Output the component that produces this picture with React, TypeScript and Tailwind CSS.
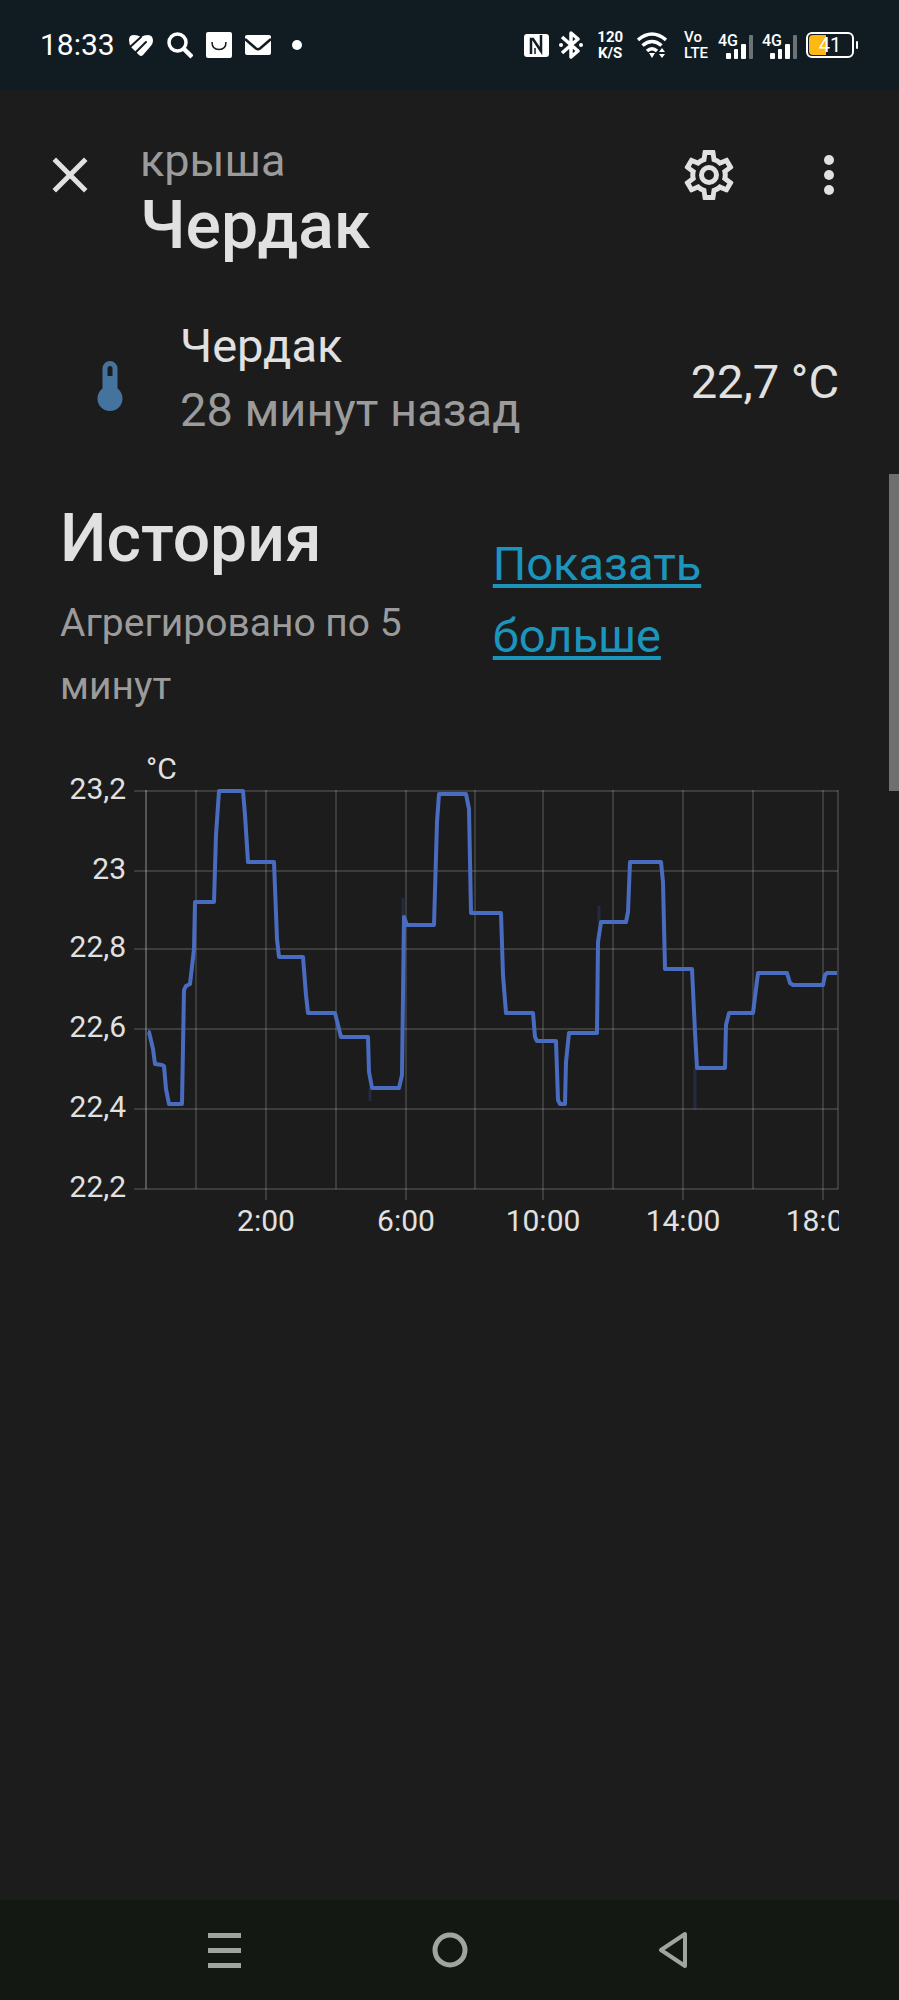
import React from 'react';

const cogPath =
  "M12,8A4,4 0 0,1 16,12A4,4 0 0,1 12,16A4,4 0 0,1 8,12A4,4 0 0,1 12,8M12,10A2,2 0 0,0 10,12A2,2 0 0,0 12,14A2,2 0 0,0 14,12A2,2 0 0,0 12,10M10,22C9.75,22 9.54,21.82 9.5,21.58L9.13,18.93C8.5,18.68 7.96,18.34 7.44,17.94L4.95,18.95C4.73,19.03 4.46,18.95 4.34,18.73L2.34,15.27C2.21,15.05 2.27,14.78 2.46,14.63L4.57,12.97L4.5,12L4.57,11L2.46,9.37C2.27,9.22 2.21,8.95 2.34,8.73L4.34,5.27C4.46,5.05 4.73,4.96 4.95,5.05L7.44,6.05C7.96,5.66 8.5,5.32 9.13,5.07L9.5,2.42C9.54,2.18 9.75,2 10,2H14C14.25,2 14.46,2.18 14.5,2.42L14.87,5.07C15.5,5.32 16.04,5.66 16.56,6.05L19.05,5.05C19.27,4.96 19.54,5.05 19.66,5.27L21.66,8.73C21.79,8.95 21.73,9.22 21.54,9.37L19.43,11L19.5,12L19.43,13L21.54,14.63C21.73,14.78 21.79,15.05 21.66,15.27L19.66,18.73C19.54,18.95 19.27,19.04 19.05,18.95L16.56,17.95C16.04,18.34 15.5,18.68 14.87,18.93L14.5,21.58C14.46,21.82 14.25,22 14,22H10M11.25,4L10.88,6.61C9.68,6.86 8.62,7.5 7.85,8.39L5.44,7.35L4.69,8.65L6.8,10.2C6.4,11.37 6.4,12.64 6.8,13.8L4.68,15.36L5.43,16.66L7.86,15.62C8.63,16.5 9.68,17.14 10.87,17.38L11.24,20H12.76L13.13,17.39C14.32,17.14 15.37,16.5 16.14,15.62L18.57,16.66L19.32,15.36L17.2,13.81C17.6,12.64 17.6,11.37 17.2,10.2L19.31,8.65L18.56,7.35L16.15,8.39C15.38,7.5 14.32,6.86 13.12,6.62L12.75,4H11.25Z";

const yTicks = [
  { label: "23,2", y: 49 },
  { label: "23", y: 129 },
  { label: "22,8", y: 207 },
  { label: "22,6", y: 287 },
  { label: "22,4", y: 367 },
  { label: "22,2", y: 447 },
];

const xTicks = [
  { label: "", x: 136 },
  { label: "2:00", x: 206 },
  { label: "", x: 276 },
  { label: "6:00", x: 346 },
  { label: "", x: 415 },
  { label: "10:00", x: 483 },
  { label: "", x: 553 },
  { label: "14:00", x: 623 },
  { label: "", x: 693 },
  { label: "18:00", x: 763 },
  { label: "", x: 778 },
];

const temperature = [
  [88, 290], [89, 290], [93, 307], [95, 322], [102, 323], [104, 324], [106, 347], [109, 362],
  [122, 362], [124, 248], [126, 244], [130, 242], [134, 207], [135, 160],
  [154, 160], [156, 93], [159, 49], [183, 49], [185, 73], [188, 120],
  [214, 120], [217, 197], [219, 215], [243, 215], [246, 253], [248, 271],
  [275, 271], [281, 295], [308, 295], [309, 330], [312, 346], [339, 346],
  [342, 333], [344, 175], [347, 183], [374, 183], [377, 80], [379, 52],
  [406, 52], [409, 67], [411, 171], [441, 171], [443, 233], [446, 271],
  [473, 271], [475, 295], [477, 299], [496, 299], [498, 358], [500, 362],
  [505, 362], [506, 320], [509, 291], [537, 291], [538, 200], [541, 180],
  [566, 180], [568, 170], [570, 120], [601, 120], [603, 140], [605, 227],
  [632, 227], [635, 290], [637, 326], [665, 326], [666, 283], [669, 271],
  [693, 271], [698, 231], [727, 231], [730, 241], [733, 243], [763, 243],
  [765, 233], [767, 231], [777, 231],
];

function Signal() {
  return (
    <svg className="h-7 w-9" viewBox="0 0 36 28" fill="#fff">
      <text x="0" y="15" fontSize="16" fontWeight="500">4G</text>
      <rect x="8" y="22" width="5" height="6" rx="1" />
      <rect x="16" y="18" width="4" height="10" rx="1" />
      <rect x="23" y="13" width="5" height="15" rx="1" />
      <rect x="31" y="4" width="4" height="24" rx="1" fill="#6c7377" />
    </svg>
  );
}

function StatusBar() {
  return (
    <div className="flex h-[90px] items-center justify-between bg-[#111c22] px-10 text-white">
      <div className="flex items-center gap-[13px]">
        <span className="text-[30px] leading-9">18:33</span>
        <svg className="h-7 w-[26px]" viewBox="0 0 26 28">
          <path
            d="M1 9Q1 4 6 4Q10 4 13 6Q16 4 20 4Q25 4 25 10Q25 13 22 16L15 24Q13 26 11 24L3 16Q1 13 1 9Z"
            fill="#fff"
          />
          <path d="M1 17L13 6M8 21L18 11" stroke="#111c22" strokeWidth="2" strokeLinecap="round" />
        </svg>
        <svg className="h-7 w-[26px]" viewBox="0 0 26 28" fill="none" stroke="#fff">
          <circle cx="10.500" cy="11.500" r="8.500" strokeWidth="3.500" />
          <path d="M16.500 17.500L25 26" strokeWidth="4.500" />
        </svg>
        <svg className="h-7 w-[26px]" viewBox="0 0 26 28">
          <rect y="1" width="26" height="26" rx="2" fill="#fff" />
          <path d="M6 11Q6 18.500 13 18.500T20 11" fill="none" stroke="#111c22" strokeWidth="1.500" />
        </svg>
        <svg className="h-7 w-[26px]" viewBox="0 0 26 28">
          <rect y="4" width="26" height="20" rx="2" fill="#fff" />
          <path d="M0 8L11 17.500Q13 19 15 17.500L26 8" fill="none" stroke="#111c22" strokeWidth="2.500" />
        </svg>
        <span className="ml-2 size-[10px] rounded-full bg-white" />
      </div>

      <div className="flex items-center">
        <svg className="h-7 w-[25px]" viewBox="0 0 25 28">
          <rect y="3" width="25" height="23" rx="3" fill="#fff" />
          <path d="M7 23V8H9L17 20V4" fill="none" stroke="#111c22" strokeWidth="2.500" />
          <path d="M11 23V17" stroke="#111c22" strokeWidth="1.500" />
        </svg>
        <svg className="ml-[10px] h-7 w-6" viewBox="0 0 24 28" fill="none" stroke="#fff" strokeWidth="3.500">
          <path d="M3 6L19 20L12 26V2L19 8L3 22" strokeLinejoin="round" />
          <circle cx="2" cy="14" r="2" fill="#fff" stroke="none" />
          <circle cx="22" cy="14" r="2" fill="#fff" stroke="none" />
        </svg>
        <div className="ml-[14px] flex flex-col text-center text-[15px] font-bold leading-4">
          <span>120</span>
          <span>K/S</span>
        </div>
        <svg className="ml-[14px] h-7 w-[30px]" viewBox="0 0 30 28" fill="none" stroke="#fff" strokeWidth="3.500">
          <path d="M1 9Q15 -3 29 9" />
          <path d="M5.500 14.500Q15 6.500 24.500 14.500" />
          <path d="M10 20Q15 15.500 20 20" />
          <path d="M12 22H18L15 27Z" fill="#fff" stroke="none" />
          <path d="M22 21L25 17L28 21ZM22 23H28L25 27Z" fill="#fff" stroke="none" />
        </svg>
        <div className="ml-[17px] flex flex-col text-[15px] font-medium leading-4">
          <span>Vo</span>
          <span>LTE</span>
        </div>
        <div className="ml-[10px] flex gap-2">
          <Signal />
          <Signal />
        </div>
        <svg className="ml-2 h-7 w-[53px]" viewBox="0 0 53 28">
          <rect x="1" y="2" width="46" height="24" rx="5" fill="none" stroke="#fff" strokeWidth="2" />
          <path d="M7 4H20V24H7Q3 24 3 20V8Q3 4 7 4Z" fill="#fdb813" />
          <rect x="50" y="10" width="2" height="8" rx="1" fill="#fff" />
          <text x="24" y="21" fontSize="20" fill="#fff" textAnchor="middle">41</text>
        </svg>
      </div>
    </div>
  );
}

function DialogHeader() {
  return (
    <header className="flex items-start px-[10px] pt-[25px]">
      <button aria-label="Закрыть" className="flex size-[120px] shrink-0 items-center justify-center">
        <svg className="size-[60px]" viewBox="0 0 24 24" fill="#e1e1e1">
          <path d="M19,6.410L17.590,5L12,10.590L6.410,5L5,6.410L10.590,12L5,17.590L6.410,19L12,13.410L17.590,19L19,17.590L13.410,12L19,6.410Z" />
        </svg>
      </button>
      <div className="flex-1 pl-[10px] pt-4">
        <p className="text-[45px] leading-[60px] text-[#9b9b9b]">крыша</p>
        <h1 className="text-[66px] font-medium leading-[70px]">Чердак</h1>
      </div>
      <button aria-label="Настройки" className="flex size-[120px] shrink-0 items-center justify-center">
        <svg className="size-[60px]" viewBox="0 0 24 24" fill="#e1e1e1">
          <path d={cogPath} />
        </svg>
      </button>
      <button aria-label="Меню" className="flex size-[120px] shrink-0 items-center justify-center">
        <svg className="size-[60px]" viewBox="0 0 24 24" fill="#e1e1e1">
          <circle cx="12" cy="6" r="2" />
          <circle cx="12" cy="12" r="2" />
          <circle cx="12" cy="18" r="2" />
        </svg>
      </button>
    </header>
  );
}

function HistoryChart() {
  return (
    <svg className="mt-6 w-full overflow-hidden" viewBox="0 0 779 500" role="img" aria-label="История температуры">
      <g stroke="#fff" strokeOpacity="0.14" strokeWidth="2">
        {yTicks.map((tick) => (
          <line key={tick.y} x1="74" x2="778" y1={tick.y} y2={tick.y} />
        ))}
        {xTicks.map((tick) => (
          <line key={tick.x} x1={tick.x} x2={tick.x} y1="48" y2={tick.label ? 458 : 447} />
        ))}
        <line x1="86" x2="86" y1="48" y2="447" strokeOpacity="0.25" />
      </g>

      <g fill="#e1e1e1" fontSize="30">
        <text x="86" y="37">°C</text>
        {yTicks.map((tick) => (
          <text key={tick.label} x="66" y={tick.y + 8} textAnchor="end">{tick.label}</text>
        ))}
        {xTicks.filter((tick) => tick.label).map((tick) => (
          <text key={tick.label} x={tick.x} y="489" textAnchor="middle">{tick.label}</text>
        ))}
      </g>

      {/* min / max spread around the mean */}
      <g stroke="#4269d0" strokeOpacity="0.2" strokeWidth="3">
        <path d="M343 156V176M310 346V359M539 164V180M635 326V368" />
      </g>
      <polyline
        points={temperature.map((p) => p.join(",")).join(" ")}
        fill="none"
        stroke="#4a6cc0"
        strokeWidth="4"
        strokeLinejoin="round"
      />
    </svg>
  );
}

export default function App() {
  return (
    <div className="relative flex min-h-screen flex-col bg-[#1c1c1c] font-[Roboto,sans-serif] text-[#e1e1e1]">
      <StatusBar />
      <DialogHeader />

      <main className="flex-1 px-[60px] pt-[53px]">
        <div className="flex items-center pl-5">
          <svg className="mt-4 size-[60px] shrink-0" viewBox="0 0 24 24" fill="#44739e">
            <path d="M15 13V5A3 3 0 0 0 9 5V13A5 5 0 1 0 15 13M12 4A1 1 0 0 1 13 5V8H11V5A1 1 0 0 1 12 4Z" />
          </svg>
          <div className="flex-1 pl-10 text-[47px] leading-[64px]">
            <p>Чердак</p>
            <p className="text-[#9b9b9b]">28 минут назад</p>
          </div>
          <span className="pt-2 text-[47px] leading-[64px]">22,7 °C</span>
        </div>

        <section className="pt-16">
          <div className="grid grid-cols-[5fr_4fr]">
            <div>
              <h2 className="text-[66px] font-medium leading-[66px]">История</h2>
              <p className="mt-5 max-w-[380px] text-[39px] leading-[63px] text-[#9b9b9b]">
                Агрегировано по 5 минут
              </p>
            </div>
            <a
              href="#history"
              className="mt-[22px] max-w-[230px] text-[47px] leading-[72px] text-[#1b95bb] underline decoration-4 underline-offset-4"
            >
              Показать больше
            </a>
          </div>
          <HistoryChart />
        </section>
      </main>

      <nav className="grid h-[100px] grid-cols-3 items-center justify-items-center bg-[#131812] px-28">
        <button aria-label="Недавние">
          <svg className="size-10" viewBox="0 0 40 40" fill="#a0a69f">
            <rect x="3" y="3" width="33" height="5" />
            <rect x="3" y="18" width="33" height="5" />
            <rect x="3" y="33" width="33" height="5" />
          </svg>
        </button>
        <button aria-label="Домой">
          <svg className="size-10" viewBox="0 0 40 40" fill="none" stroke="#a0a69f" strokeWidth="5">
            <circle cx="20" cy="20" r="15" />
          </svg>
        </button>
        <button aria-label="Назад">
          <svg className="size-10" viewBox="0 0 40 40" fill="none" stroke="#a0a69f" strokeWidth="4" strokeLinejoin="round">
            <path d="M30 4V36L6 20Z" />
          </svg>
        </button>
      </nav>

      {/* scroll thumb */}
      <div className="absolute right-0 top-[474px] h-[317px] w-[10px] bg-[#6f6f6f]" />
    </div>
  );
}
